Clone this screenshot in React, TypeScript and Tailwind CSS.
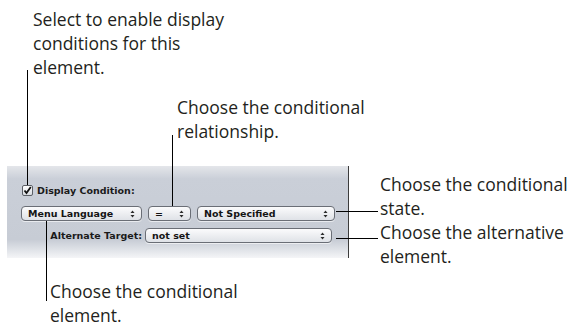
import * as React from "react";

function Arrows() {
  return (
    <svg width="5" height="10" viewBox="0 0 5 10" className="shrink-0">
      <path d="M0.5 4 L2.5 1.5 L4.5 4 Z" fill="#2a2a2a" />
      <path d="M0.5 6 L2.5 8.5 L4.5 6 Z" fill="#2a2a2a" />
    </svg>
  );
}

function Popup({ label, width }: { label: string; width: string }) {
  return (
    <div
      className={`${width} flex h-[15px] items-center justify-between rounded-[4px] border border-[#6a6e76] bg-gradient-to-b from-[#fbfbfc] to-[#dfe2e7] pl-[6px] pr-[6px] shadow-[0_1px_0_rgba(255,255,255,0.6)]`}
    >
      <span className="text-[9.5px] font-bold leading-none text-[#141414]">{label}</span>
      <Arrows />
    </div>
  );
}

function Callout({ lines, className }: { lines: string[]; className: string }) {
  return (
    <div className={`absolute font-['Open_Sans',sans-serif] text-[17.5px] leading-[24px] text-[#231f20] ${className}`}>
      {lines.map((l) => (
        <div key={l} className="whitespace-nowrap">
          {l}
        </div>
      ))}
    </div>
  );
}

export default function App() {
  return (
    <div className="relative h-[327px] w-[571px] overflow-hidden bg-white">
      <div className="pl-[7px] pt-[166px]">
        {/* inspector panel */}
        <div className="flex w-[342px] flex-col border-r border-[#3c3c3c] bg-[linear-gradient(to_bottom,#e4e6ea_0%,#cacfd8_14%,#c7ccd5_80%,#f4f5f7_100%)] pb-[15px] pl-[14px] pt-[19px] font-['DejaVu_Sans',sans-serif]">
          <div className="flex h-[11px] items-center gap-[4px]">
            <div className="ml-[1px] flex h-[11px] w-[11px] items-center justify-center rounded-[2px] border border-[#5b5f66] bg-gradient-to-b from-[#ffffff] to-[#d8dbe0]">
              <svg width="9" height="9" viewBox="0 0 9 9">
                <path d="M1.5 4.5 L3.5 7 L7.8 1" fill="none" stroke="#111" strokeWidth="1.8" />
              </svg>
            </div>
            <span className="text-[9.5px] font-bold leading-none text-[#1a1a1a]">Display Condition:</span>
          </div>
          <div className="mt-[10px] flex gap-[6px]">
            <Popup label="Menu Language" width="w-[121px]" />
            <Popup label="=" width="w-[43px]" />
            <Popup label="Not Specified" width="w-[138px]" />
          </div>
          <div className="mt-[7px] flex items-center">
            <span className="w-[124px] pr-[3px] text-right text-[9.5px] font-bold leading-none text-[#1a1a1a]">
              Alternate Target:
            </span>
            <Popup label="not set" width="w-[187px]" />
          </div>
        </div>
      </div>

      {/* callouts */}
      <Callout className="left-[33px] top-[7px]" lines={["Select to enable display", "conditions for this", "element."]} />
      <div className="absolute left-[27px] top-[70px] h-[115px] w-px bg-black" />

      <Callout className="left-[177px] top-[95px]" lines={["Choose the conditional", "relationship."]} />
      <div className="absolute left-[172px] top-[135px] h-[71px] w-px bg-black" />

      <Callout className="left-[380px] top-[172px]" lines={["Choose the conditional", "state."]} />
      <div className="absolute left-[336px] top-[211px] h-px w-[42px] bg-black" />

      <Callout className="left-[380px] top-[220px]" lines={["Choose the alternative", "element."]} />
      <div className="absolute left-[336px] top-[238px] h-px w-[42px] bg-black" />

      <Callout className="left-[50px] top-[279px]" lines={["Choose the conditional", "element."]} />
      <div className="absolute left-[46px] top-[221px] h-[80px] w-px bg-black" />
    </div>
  );
}
